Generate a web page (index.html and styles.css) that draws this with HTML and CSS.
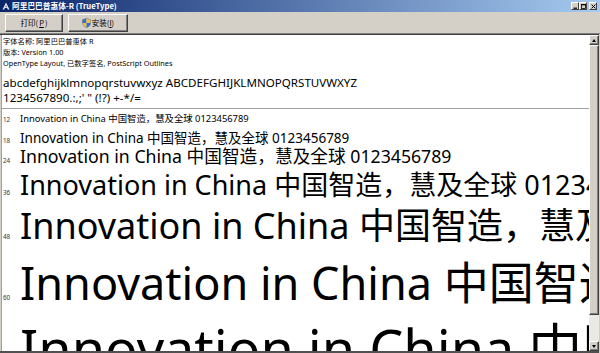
FILE: index.html
```html
<!DOCTYPE html>
<html lang="zh-CN">
<head>
<meta charset="utf-8">
<title>阿里巴巴普惠体-R (TrueType)</title>
<link rel="stylesheet" href="styles.css">
</head>
<body>
<div class="window">
  <div class="titlebar">
    <svg class="ticon" width="8" height="8" viewBox="0 0 8 8"><polygon points="4,0.5 7.5,7.5 5.8,7.5 4,3.4 2.2,7.5 0.5,7.5" fill="#e8e8e8"/><rect x="2.6" y="5" width="2.8" height="0.9" fill="#e8e8e8"/></svg>
    <span class="title">阿里巴巴普惠体-R (TrueType)</span>
    <div class="controls">
      <span class="cbtn"><svg width="5" height="5" viewBox="0 0 5 5"><rect x="0.5" y="3.6" width="3.5" height="1.2" fill="#000"/></svg></span>
      <span class="cbtn"><svg width="5" height="5" viewBox="0 0 5 5"><rect x="0.5" y="0.5" width="4" height="4" fill="none" stroke="#000" stroke-width="0.8"/><rect x="0.5" y="0.3" width="4" height="1" fill="#000"/></svg></span>
      <span class="cbtn close"><svg width="5" height="5" viewBox="0 0 5 5"><path d="M0.6 0.6 L4.4 4.4 M4.4 0.6 L0.6 4.4" stroke="#000" stroke-width="1"/></svg></span>
    </div>
  </div>
  <div class="toolbar">
    <button class="btn btn-print">打印(<u>P</u>)</button>
    <button class="btn btn-install"><svg class="shield" width="9" height="10" viewBox="0 0 9 10"><defs><clipPath id="sh"><path d="M4.5 0.4 L8.5 1.7 V5 C8.5 7.4 6.6 8.9 4.5 9.7 C2.4 8.9 0.5 7.4 0.5 5 V1.7 Z"/></clipPath></defs><g clip-path="url(#sh)"><rect x="0" y="0" width="4.5" height="5" fill="#2f6fd6"/><rect x="4.5" y="0" width="4.5" height="5" fill="#f0c53a"/><rect x="0" y="5" width="4.5" height="5" fill="#f0c53a"/><rect x="4.5" y="5" width="4.5" height="5" fill="#2f6fd6"/></g><path d="M4.5 0.4 L8.5 1.7 V5 C8.5 7.4 6.6 8.9 4.5 9.7 C2.4 8.9 0.5 7.4 0.5 5 V1.7 Z" fill="none" stroke="#5a6a7a" stroke-width="0.5"/></svg><span>安装(<u>I</u>)</span></button>
  </div>
  <div class="client">
    <div class="content">
      <div class="info">
        <div>字体名称: 阿里巴巴普惠体 R</div>
        <div>版本: Version 1.00</div>
        <div>OpenType Layout, 已数字签名, PostScript Outlines</div>
      </div>
      <div class="alpha">
        <div>abcdefghijklmnopqrstuvwxyz ABCDEFGHIJKLMNOPQRSTUVWXYZ</div>
        <div>1234567890.:,;' " (!?) +-*/=</div>
      </div>
      <div class="sep"></div>
      <div class="samples">
        <div class="row r12"><span class="lbl">12</span>Innovation in China 中国智造，慧及全球 0123456789</div>
        <div class="row r18"><span class="lbl">18</span>Innovation in China 中国智造，慧及全球 0123456789</div>
        <div class="row r24"><span class="lbl">24</span>Innovation in China 中国智造，慧及全球 0123456789</div>
        <div class="row r36"><span class="lbl">36</span>Innovation in China 中国智造，慧及全球 0123456789</div>
        <div class="row r48"><span class="lbl">48</span>Innovation in China 中国智造，慧及全球 0123456789</div>
        <div class="row r60"><span class="lbl">60</span>Innovation in China 中国智造，慧及全球 0123456789</div>
        <div class="row r72"><span class="lbl">72</span>Innovation in China 中国智造，慧及全球 0123456789</div>
      </div>
    </div>
    <div class="scrollbar">
      <div class="sb-btn"><span class="arrow up"></span></div>
      <div class="sb-thumb"></div>
      <div class="sb-track"></div>
      <div class="sb-btn"><span class="arrow down"></span></div>
    </div>
  </div>
</div>
</body>
</html>
```
FILE: styles.css
```css
* { box-sizing: border-box; }
html, body { margin: 0; padding: 0; }
body {
  width: 600px;
  height: 353px;
  overflow: hidden;
  background: #d4d0c8;
  font-family: "Noto Sans", "Noto Sans CJK SC", sans-serif;
  color: #000;
}
.window {
  display: flex;
  flex-direction: column;
  height: 353px;
}
.titlebar {
  flex: none;
  height: 12px;
  display: flex;
  align-items: center;
  padding: 0 3px 0 2px;
  background: linear-gradient(to right, #0a246a, #a6caf0);
}
.ticon { flex: none; margin-right: 2px; }
.title {
  color: #fff;
  font-family: "Noto Sans CJK SC", sans-serif;
  font-weight: bold;
  font-size: 7.7px;
  line-height: 12px;
  white-space: nowrap;
}
.controls {
  margin-left: auto;
  display: flex;
}
.cbtn {
  width: 8px;
  height: 8px;
  background: #d4d0c8;
  border: 1px solid;
  border-color: #fff #404040 #404040 #fff;
  display: flex;
  align-items: center;
  justify-content: center;
}
.cbtn.close { margin-left: 2px; }
.cbtn svg { width: 5px; height: 5px; }

.toolbar {
  flex: none;
  height: 22px;
  display: flex;
  gap: 5px;
  padding: 2px 0 0 5px;
  border-bottom: 1px solid #808080;
}
.btn {
  appearance: none;
  margin: 0;
  padding: 0;
  height: 18px;
  background: #d4d0c8;
  border: 1px solid;
  border-color: #fff #404040 #404040 #fff;
  box-shadow: inset -1px -1px #808080;
  font-family: "Noto Sans CJK SC", sans-serif;
  font-size: 7.5px;
  line-height: 1;
  color: #000;
  display: flex;
  align-items: center;
  justify-content: center;
  gap: 1px;
}
.btn u { text-decoration: underline; }
.btn-print { width: 58px; }
.btn-install { width: 60px; }

.client {
  flex: 1;
  min-height: 0;
  display: flex;
  border-top: 1px solid #404040;
  border-bottom: 2px solid #505050;
  margin-right: 1px;
}
.content {
  flex: 1;
  min-width: 0;
  overflow: hidden;
  background: #fff;
  margin-left: 1px;
  border-left: 1px solid #a0a0a0;
  padding: 1px 0 0 1px;
}
.info {
  font-size: 7.3px;
  line-height: 11px;
  white-space: nowrap;
}
.alpha {
  margin-top: 6px;
  font-size: 11.6px;
  line-height: 15px;
  white-space: nowrap;
}
.sep {
  margin-top: 3px;
  margin-left: -1px;
  height: 1px;
  background: #a0a0a0;
}
.row { white-space: nowrap; }
.lbl {
  display: inline-block;
  width: 17px;
  font-size: 6.3px;
  line-height: 8px;
  color: #333;
}
.r12 { font-size: 9.4px; height: 19px; line-height: 19px; }
.r18 { font-size: 13.5px; height: 20px; line-height: 20px; }
.r24 { font-size: 17.7px; height: 16px; line-height: 16px; }
.r36 { font-size: 27px; height: 41px; line-height: 41px; }
.r48 { font-size: 36px; height: 42px; line-height: 42px; }
.r60 { font-size: 45px; height: 71px; line-height: 71px; }
.r72 { font-size: 54px; height: 60px; line-height: 60px; }

.scrollbar {
  flex: none;
  width: 10px;
  display: flex;
  flex-direction: column;
  background: #ebe9e5;
}
.sb-btn, .sb-thumb {
  background: #d4d0c8;
  border: 1px solid;
  border-color: #fff #404040 #404040 #fff;
  box-shadow: inset -1px -1px #808080;
}
.sb-btn {
  flex: none;
  height: 10px;
  display: flex;
  align-items: center;
  justify-content: center;
}
.sb-thumb { flex: none; height: 270px; }
.sb-track { flex: 1; }
.arrow {
  width: 0;
  height: 0;
  border-left: 2.5px solid transparent;
  border-right: 2.5px solid transparent;
}
.arrow.up { border-bottom: 3px solid #000; }
.arrow.down { border-top: 3px solid #000; }
```
